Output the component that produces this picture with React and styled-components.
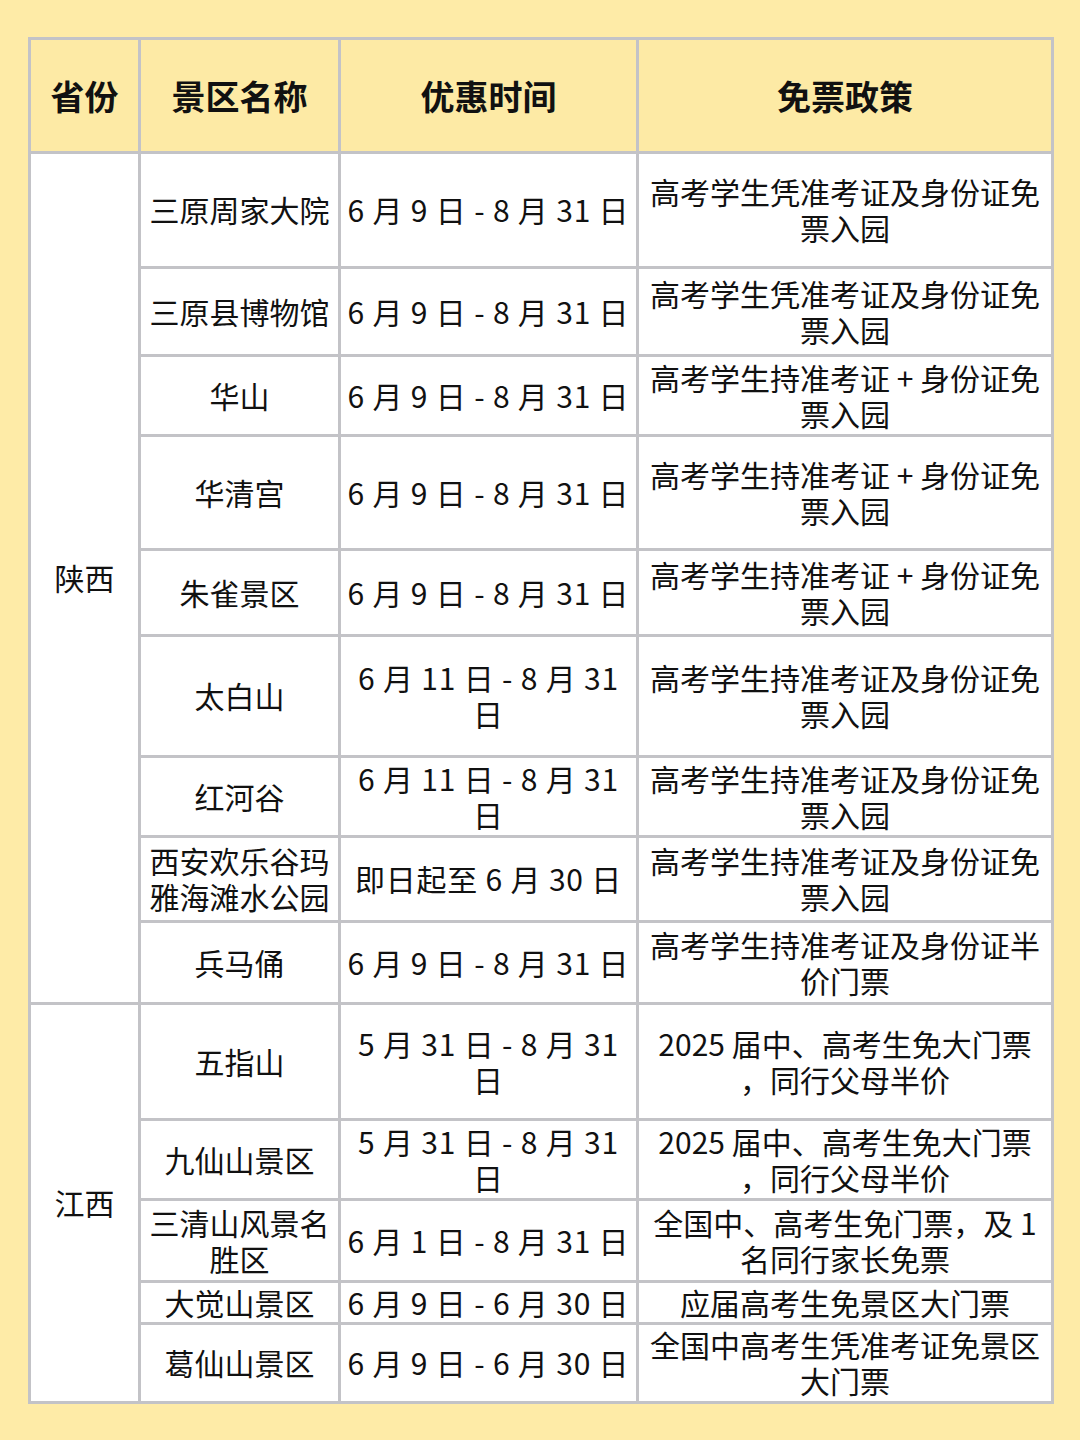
import React from "react";
import styled, { createGlobalStyle } from "styled-components";

const Global = createGlobalStyle`
  html, body { margin: 0; padding: 0; background: #feeba7; }
  body { font-family: "Noto Sans CJK SC", "Noto Sans", sans-serif; color: #111; }
`;

const Page = styled.div`
  width: 1080px;
  height: 1440px;
  box-sizing: border-box;
  padding: 37px 28px 0 28px;
  background: #feeba7;
`;

const Table = styled.table`
  width: 1023px;
  table-layout: fixed;
  border-collapse: collapse;
  border: 3px solid #c3c3c7;
  background: #fff;
`;

const HeadCell = styled.th`
  border: 3px solid #c3c3c7;
  background: #fdeaa5;
  font-size: 34px;
  font-weight: 700;
  height: 111px;
  padding: 0;
  text-align: center;
  vertical-align: middle;
`;

const Cell = styled.td`
  border: 3px solid #c3c3c7;
  font-size: 30px;
  line-height: 36px;
  padding: 0 2px 2px;
  text-align: center;
  vertical-align: middle;
  white-space: nowrap;
  letter-spacing: ${(p) => (p.$wide ? "0.8px" : "0")};
`;

const Row = styled.tr``;

const cols = [110, 200, 298, 415];

const rows = [
  { h: 115, name: ["三原周家大院"], date: ["6 月 9 日 - 8 月 31 日"], policy: ["高考学生凭准考证及身份证免", "票入园"] },
  { h: 88, name: ["三原县博物馆"], date: ["6 月 9 日 - 8 月 31 日"], policy: ["高考学生凭准考证及身份证免", "票入园"] },
  { h: 80, name: ["华山"], date: ["6 月 9 日 - 8 月 31 日"], policy: ["高考学生持准考证 + 身份证免", "票入园"] },
  { h: 114, name: ["华清宫"], date: ["6 月 9 日 - 8 月 31 日"], policy: ["高考学生持准考证 + 身份证免", "票入园"] },
  { h: 86, name: ["朱雀景区"], date: ["6 月 9 日 - 8 月 31 日"], policy: ["高考学生持准考证 + 身份证免", "票入园"] },
  { h: 121, name: ["太白山"], date: ["6 月 11 日 - 8 月 31", "日"], policy: ["高考学生持准考证及身份证免", "票入园"] },
  { h: 80, name: ["红河谷"], date: ["6 月 11 日 - 8 月 31", "日"], policy: ["高考学生持准考证及身份证免", "票入园"] },
  { h: 85, name: ["西安欢乐谷玛", "雅海滩水公园"], date: ["即日起至 6 月 30 日"], policy: ["高考学生持准考证及身份证免", "票入园"] },
  { h: 82, name: ["兵马俑"], date: ["6 月 9 日 - 8 月 31 日"], policy: ["高考学生持准考证及身份证半", "价门票"] },
  { h: 116, name: ["五指山"], date: ["5 月 31 日 - 8 月 31", "日"], policy: ["2025 届中、高考生免大门票", "，同行父母半价"] },
  { h: 80, name: ["九仙山景区"], date: ["5 月 31 日 - 8 月 31", "日"], policy: ["2025 届中、高考生免大门票", "，同行父母半价"] },
  { h: 82, name: ["三清山风景名", "胜区"], date: ["6 月 1 日 - 8 月 31 日"], policy: ["全国中、高考生免门票，及 1", "名同行家长免票"] },
  { h: 42, name: ["大觉山景区"], date: ["6 月 9 日 - 6 月 30 日"], policy: ["应届高考生免景区大门票"] },
  { h: 79, name: ["葛仙山景区"], date: ["6 月 9 日 - 6 月 30 日"], policy: ["全国中高考生凭准考证免景区", "大门票"] },
];

const Lines = ({ lines }) =>
  lines.map((l, i) => (
    <React.Fragment key={i}>
      {i > 0 && <br />}
      {l}
    </React.Fragment>
  ));

export default function App() {
  return (
    <>
      <Global />
      <Page>
        <Table>
          <colgroup>
            {cols.map((w, i) => (
              <col key={i} style={{ width: w }} />
            ))}
          </colgroup>
          <thead>
            <Row>
              <HeadCell>省份</HeadCell>
              <HeadCell>景区名称</HeadCell>
              <HeadCell>优惠时间</HeadCell>
              <HeadCell>免票政策</HeadCell>
            </Row>
          </thead>
          <tbody>
            {rows.map((r, i) => (
              <Row key={i} style={{ height: r.h }}>
                {i === 0 && <Cell rowSpan={9}>陕西</Cell>}
                {i === 9 && <Cell rowSpan={5}>江西</Cell>}
                <Cell>
                  <Lines lines={r.name} />
                </Cell>
                <Cell $wide>
                  <Lines lines={r.date} />
                </Cell>
                <Cell>
                  <Lines lines={r.policy} />
                </Cell>
              </Row>
            ))}
          </tbody>
        </Table>
      </Page>
    </>
  );
}
